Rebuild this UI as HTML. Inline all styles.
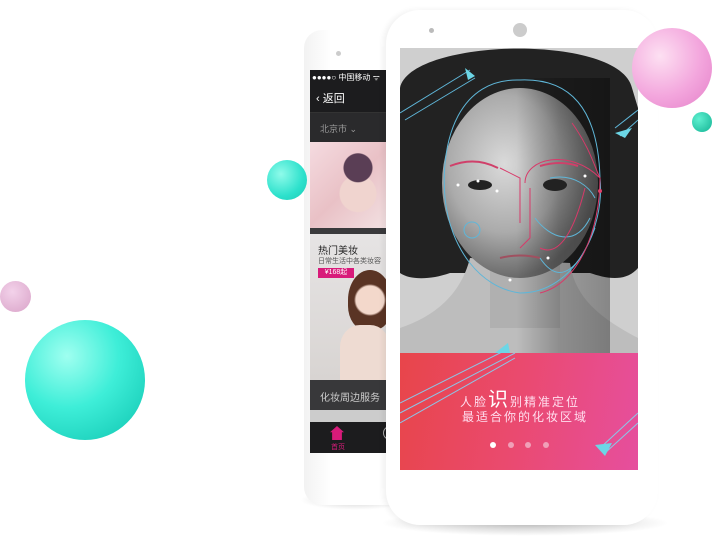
<!DOCTYPE html>
<html><head><meta charset="utf-8"><style>
*{margin:0;padding:0;box-sizing:border-box}
body{width:712px;height:540px;background:#fff;position:relative;overflow:hidden;font-family:"Liberation Sans","Noto Sans CJK SC",sans-serif}
.a{position:absolute}
.ball{position:absolute;border-radius:50%}
</style></head><body>
<div class="a" style="left:300px;top:490px;width:110px;height:20px;border-radius:50%;background:radial-gradient(ellipse,rgba(0,0,0,.18),rgba(0,0,0,0) 70%)"></div>
<div class="a" style="left:380px;top:510px;width:290px;height:26px;border-radius:50%;background:radial-gradient(ellipse,rgba(0,0,0,.25),rgba(0,0,0,0) 70%)"></div>
<div class="a" style="left:304px;top:30px;width:90px;height:475px;background:linear-gradient(90deg,#f2f2f2,#fff 30%,#fff);border-radius:18px 0 0 18px"></div>
<div class="ball" style="left:336px;top:51px;width:5px;height:5px;background:#ccc"></div>
<div class="a" style="left:310px;top:70px;width:80px;height:383px;background:#1c1c1e;overflow:hidden;font-size:9px;color:#fff">
 <div class="a" style="left:2px;top:2px;font-size:8px;white-space:nowrap">●●●●○ 中国移动 ᯤ</div>
 <div class="a" style="left:6px;top:20px;font-size:11px">‹ 返回</div>
 <div class="a" style="left:0;top:42px;width:80px;height:30px;background:#2a2a2c;border-top:1px solid #333"></div>
 <div class="a" style="left:10px;top:52px;color:#999;font-size:9px">北京市 ⌄</div>
 <div class="a" style="left:0;top:72px;width:80px;height:86px;background:radial-gradient(circle at 60% 30%,#5a3e55 0 14px,transparent 15px),radial-gradient(circle at 60% 60%,#f0d4cf 0 18px,transparent 19px),linear-gradient(135deg,#f5dbe0,#e9c1c6 50%,#f3e2e3)"></div>
 <div class="a" style="left:0;top:158px;width:80px;height:6px;background:#3a3a3c"></div>
 <div class="a" style="left:0;top:164px;width:80px;height:146px;background:linear-gradient(#e6e4e4,#d8d4d2)"></div>
 <div class="a" style="left:38px;top:200px;width:44px;height:60px;border-radius:50% 50% 40% 40%;background:radial-gradient(circle at 50% 50%,#f3d8cb 0 14px,#5a3424 16px)"></div>
 <div class="a" style="left:30px;top:255px;width:50px;height:55px;border-radius:40% 40% 0 0;background:#eedbd2"></div>
 <div class="a" style="left:8px;top:172px;color:#222;font-size:10px">热门美妆</div>
 <div class="a" style="left:8px;top:186px;color:#555;font-size:7px;white-space:nowrap">日常生活中各类妆容</div>
 <div class="a" style="left:8px;top:198px;width:36px;height:10px;background:#d81b7a;color:#fff;font-size:7px;text-align:center;line-height:10px">¥168起</div>
 <div class="a" style="left:0;top:310px;width:80px;height:30px;background:#38383a;color:#ccc;font-size:10px;padding:9px 0 0 10px">化妆周边服务</div>
 <div class="a" style="left:0;top:340px;width:80px;height:12px;background:#ccc"></div>
 <div class="a" style="left:0;top:352px;width:80px;height:31px;background:#1c1c1e"></div>
 <div class="a" style="left:20px;top:356px;width:14px;height:14px;background:#d81b7a;clip-path:polygon(50% 0,100% 45%,85% 45%,85% 100%,15% 100%,15% 45%,0 45%)"></div>
 <div class="a" style="left:21px;top:372px;color:#d81b7a;font-size:7px">首页</div>
 <div class="ball" style="left:73px;top:356px;width:14px;height:14px;border:1px solid #aaa"></div>
</div>
<div class="a" style="left:386px;top:10px;width:272px;height:515px;background:#fff;border-radius:34px;box-shadow:-3px 0 6px rgba(0,0,0,.06)"></div>
<div class="ball" style="left:513px;top:23px;width:14px;height:14px;background:#ccc"></div>
<div class="ball" style="left:429px;top:28px;width:5px;height:5px;background:#bbb"></div>
<svg class="a" style="left:400px;top:48px" width="238" height="305">
 <defs><radialGradient id="fg" cx="40%" cy="40%" r="60%"><stop offset="0" stop-color="#dadada"/><stop offset=".6" stop-color="#ababab"/><stop offset="1" stop-color="#6a6a6a"/></radialGradient>
 <linearGradient id="sh" x1="0" x2="1"><stop offset="0" stop-color="#000" stop-opacity="0"/><stop offset=".45" stop-color="#000" stop-opacity="0"/><stop offset=".7" stop-color="#000" stop-opacity=".25"/><stop offset="1" stop-color="#000" stop-opacity=".35"/></linearGradient></defs>
 <rect width="238" height="305" fill="#cfcfcf"/>
 <path d="M0 40 C10 -10 220 -15 232 40 L238 60 L238 220 C225 235 205 230 190 225 L50 225 C30 232 10 232 0 225 Z" fill="#222"/>
 <path d="M170 215 C175 250 200 270 238 290 L238 305 L0 305 L0 280 C30 270 60 250 70 210 Z" fill="#bdbdbd"/>
 <rect x="90" y="200" width="70" height="80" fill="#b0b0b0"/>
 <ellipse cx="120" cy="135" rx="78" ry="95" fill="url(#fg)"/>
 <rect x="40" y="30" width="170" height="280" fill="url(#sh)"/>
 <ellipse cx="80" cy="137" rx="12" ry="5" fill="#222"/>
 <ellipse cx="155" cy="137" rx="12" ry="6" fill="#222"/>
 <path d="M50 118 Q75 108 98 120 M140 118 Q160 112 178 118" stroke="#d0406a" stroke-width="2" fill="none"/>
 <path d="M100 210 Q120 205 140 210" stroke="#a05060" stroke-width="2" fill="none"/>
 <g fill="none" stroke="#5fb6d8" stroke-width="1">
  <path d="M120 32 C60 30 40 90 45 150 C50 200 80 240 120 245 C175 245 205 180 200 130 C198 60 170 30 120 32"/>
  <path d="M0 65 L70 22 M5 72 L75 30 M238 62 L215 80 M238 72 L220 88"/>
  <path d="M150 130 C175 125 190 140 195 150 M135 170 C150 190 175 200 190 170 M140 210 C160 240 180 220 195 180"/>
  <circle cx="72" cy="182" r="8"/>
 </g>
 <g fill="none" stroke="#d83a6a" stroke-width="1">
  <path d="M125 135 C125 110 170 100 200 130 C200 180 180 235 140 245 M130 140 L130 190 L120 200 M140 200 C160 210 175 180 185 140 M172 75 C190 100 195 120 200 130"/>
  <path d="M100 120 L120 130 L120 175"/>
 </g>
 <path d="M215 85 L232 80 L225 90Z" fill="#6cd6e6"/>
 <path d="M65 20 L75 28 L68 32Z" fill="#6cd6e6"/>
 <g fill="#fff"><circle cx="58" cy="137" r="1.5"/><circle cx="78" cy="133" r="1.5"/><circle cx="97" cy="143" r="1.5"/><circle cx="148" cy="210" r="1.5"/><circle cx="110" cy="232" r="1.5"/><circle cx="185" cy="128" r="1.5"/></g>
 <circle cx="200" cy="143" r="2" fill="#e0406a"/>
 <path d="M95 305 L108 295 L110 305Z" fill="#6cd6e6"/>
</svg>
<div class="a" style="left:400px;top:353px;width:238px;height:117px;background:linear-gradient(100deg,#e8454a,#ea4a70 50%,#e64f9e)">
 <svg class="a" style="left:0;top:0" width="238" height="117"><g fill="none" stroke="#8cc6e8" stroke-width="1"><path d="M0 50 L110 -5 M0 60 L115 0 M0 70 L115 5 M238 60 L200 95 M238 70 L205 100"/></g><path d="M195 92 L212 90 L205 103Z" fill="#6cd6e6"/></svg>
 <div class="a" style="left:60px;top:30px;color:#fde;font-size:12px;letter-spacing:2px;white-space:nowrap">人脸<span style="font-size:20px;color:#fff">识</span>别精准定位</div>
 <div class="a" style="left:62px;top:55px;color:#fde;font-size:12px;letter-spacing:2px;white-space:nowrap">最适合你的化妆区域</div>
 <div class="ball" style="left:90px;top:89px;width:6px;height:6px;background:#fff"></div>
 <div class="ball" style="left:108px;top:89px;width:6px;height:6px;background:#f0a0b8"></div>
 <div class="ball" style="left:125px;top:89px;width:6px;height:6px;background:#f0a0b8"></div>
 <div class="ball" style="left:143px;top:89px;width:6px;height:6px;background:#f0a0b8"></div>
</div>
<div class="ball" style="left:632px;top:28px;width:80px;height:80px;background:radial-gradient(circle at 35% 35%,#fde0f2,#f3a6dd 55%,#e47fc8)"></div>
<div class="ball" style="left:692px;top:112px;width:20px;height:20px;background:radial-gradient(circle at 35% 35%,#5ff0d0,#13b394)"></div>
<div class="ball" style="left:267px;top:160px;width:40px;height:40px;background:radial-gradient(circle at 35% 35%,#8ffbea,#2de1cc 60%,#1bc8b4)"></div>
<div class="ball" style="left:0px;top:281px;width:31px;height:31px;background:radial-gradient(circle at 40% 35%,#f3d2ea,#d9a3c8)"></div>
<div class="ball" style="left:25px;top:320px;width:120px;height:120px;background:radial-gradient(circle at 35% 30%,#9ffff0,#3eeed8 45%,#1fd3be 80%,#15bca8)"></div>
</body></html>
